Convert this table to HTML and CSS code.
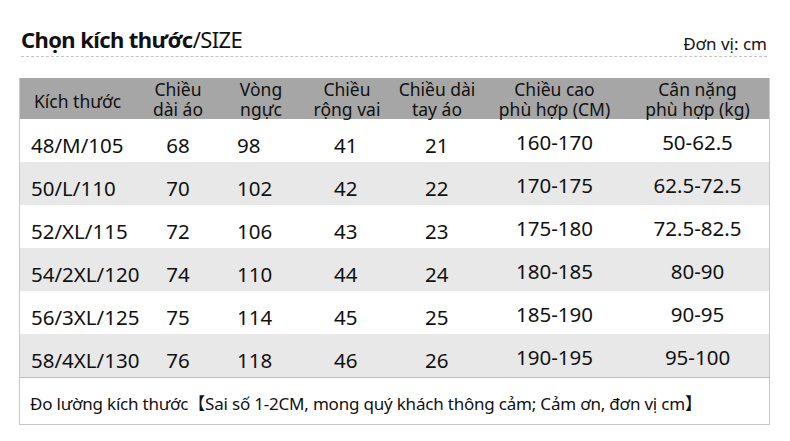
FILE: index.html
```html
<!DOCTYPE html>
<html lang="vi">
<head>
<meta charset="utf-8">
<link rel="stylesheet" href="styles.css">
</head>
<body>
<div class="page">
  <div class="top">
    <h1 class="title"><b>Chọn kích thước</b>/SIZE</h1>
    <div class="unit">Đơn vị: cm</div>
  </div>
  <div class="table">
    <div class="row head">
      <div class="c c1">Kích thước</div>
      <div class="c c2">Chiều<br>dài áo</div>
      <div class="c c3">Vòng<br>ngực</div>
      <div class="c c4">Chiều<br>rộng vai</div>
      <div class="c c5">Chiều dài<br>tay áo</div>
      <div class="c c6">Chiều cao<br>phù hợp (CM)</div>
      <div class="c c7">Cân nặng<br>phù hợp (kg)</div>
    </div>
    <div class="row">
      <div class="c c1">48/M/105</div><div class="c c2">68</div><div class="c c3">98</div><div class="c c4">41</div><div class="c c5">21</div><div class="c c6">160-170</div><div class="c c7">50-62.5</div>
    </div>
    <div class="row alt">
      <div class="c c1">50/L/110</div><div class="c c2">70</div><div class="c c3">102</div><div class="c c4">42</div><div class="c c5">22</div><div class="c c6">170-175</div><div class="c c7">62.5-72.5</div>
    </div>
    <div class="row">
      <div class="c c1">52/XL/115</div><div class="c c2">72</div><div class="c c3">106</div><div class="c c4">43</div><div class="c c5">23</div><div class="c c6">175-180</div><div class="c c7">72.5-82.5</div>
    </div>
    <div class="row alt">
      <div class="c c1">54/2XL/120</div><div class="c c2">74</div><div class="c c3">110</div><div class="c c4">44</div><div class="c c5">24</div><div class="c c6">180-185</div><div class="c c7">80-90</div>
    </div>
    <div class="row">
      <div class="c c1">56/3XL/125</div><div class="c c2">75</div><div class="c c3">114</div><div class="c c4">45</div><div class="c c5">25</div><div class="c c6">185-190</div><div class="c c7">90-95</div>
    </div>
    <div class="row alt">
      <div class="c c1">58/4XL/130</div><div class="c c2">76</div><div class="c c3">118</div><div class="c c4">46</div><div class="c c5">26</div><div class="c c6">190-195</div><div class="c c7">95-100</div>
    </div>
    <div class="foot">Đo lường kích thước【Sai số 1-2CM, mong quý khách thông cảm; Cảm ơn, đơn vị cm】</div>
  </div>
</div>
</body>
</html>
```
FILE: styles.css
```css
html, body {
  margin: 0;
  padding: 0;
  background: #ffffff;
}
body {
  font-family: "Noto Sans", "Open Sans", "Noto Sans CJK SC", sans-serif;
  color: #111111;
  width: 790px;
  height: 441px;
  overflow: hidden;
}
.page {
  padding: 26px 20px 0 19px;
}
.top {
  display: flex;
  justify-content: space-between;
  align-items: flex-end;
  margin: 0 3px 0 2px;
  border-bottom: 1px dashed #c4c4c4;
}
.title {
  margin: 0 0 4px 0;
  font-size: 22px;
  line-height: 26px;
  font-weight: 400;
  letter-spacing: -0.6px;
  color: #111;
}
.title b {
  font-weight: 700;
}
.unit {
  font-size: 17px;
  line-height: 20px;
  margin-bottom: 2px;
  color: #111;
}
.table {
  margin-top: 21px;
  width: 749px;
  border-left: 1px solid #c8c8c8;
  border-right: 1px solid #c8c8c8;
  border-bottom: 1px solid #c8c8c8;
}
.row {
  display: grid;
  grid-template-columns: 117px 82px 84px 88px 104px 131px 143px;
  height: 43px;
  font-size: 20.5px;
}
.row.alt {
  background: #e8e8e8;
}
.row.head {
  background: #a6a6a6;
  height: 41px;
  font-size: 17.5px;
  line-height: 20px;
}
.c {
  display: flex;
  align-items: center;
  justify-content: center;
  text-align: center;
  padding-top: 8px;
  white-space: nowrap;
}
.row.head .c {
  padding-top: 1px;
}
.row .c1 {
  justify-content: flex-start;
  text-align: left;
  padding-left: 11px;
}
.row.head .c1 {
  padding-left: 14px;
  padding-top: 4px;
}
.row .c3 { justify-content: flex-start; padding-left: 18px; }
.row .c4 { justify-content: flex-start; padding-left: 31px; }
.row .c5 { justify-content: flex-start; padding-left: 34px; }
.row .c6 { padding-right: 12px; padding-top: 3px; }
.row .c7 { padding-top: 3px; }
.row.head .c3, .row.head .c4 { justify-content: center; padding-left: 0; }
.row.head .c5 { justify-content: center; padding-left: 0; padding-right: 12px; }
.foot {
  border-top: 1px solid #bdbdbd;
  height: 47px;
  display: flex;
  align-items: center;
  padding-left: 10px;
  padding-top: 2px;
  box-sizing: border-box;
  font-size: 17px;
  letter-spacing: -0.2px;
}
```
